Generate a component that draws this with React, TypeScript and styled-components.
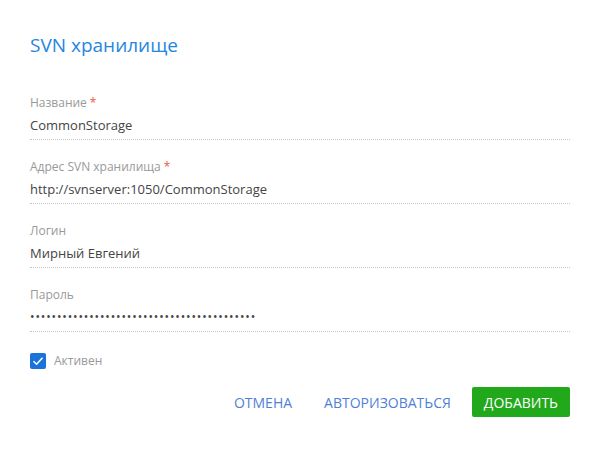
import React from "react";
import styled, { createGlobalStyle } from "styled-components";

const Global = createGlobalStyle`
  html, body { margin: 0; padding: 0; background: #ffffff; }
  body { font-family: "Open Sans", "Liberation Sans", sans-serif; }
`;

const Dialog = styled.div`
  width: 600px;
  height: 464px;
  box-sizing: border-box;
  padding: 31px 30px 0 30px;
  display: flex;
  flex-direction: column;
`;

const Title = styled.h1`
  margin: 0 0 36px 0;
  font-size: 19px;
  line-height: 28px;
  font-weight: 400;
  color: #1f86e3;
`;

const Fields = styled.div`
  display: flex;
  flex-direction: column;
  gap: 19px;
`;

const Field = styled.div`
  display: flex;
  flex-direction: column;
  padding-bottom: 4px;
  border-bottom: 1px dotted #c6c6c6;
`;

const Label = styled.div`
  font-size: 12px;
  line-height: 16px;
  color: #999999;
  margin-bottom: 4px;
`;

const Required = styled.span`
  color: #f2553d;
  margin-left: 3px;
`;

const Value = styled.div<{ $secret?: boolean }>`
  font-size: 13px;
  line-height: 20px;
  color: #444444;
  white-space: nowrap;
  ${(p) => (p.$secret ? "letter-spacing: 0.87px; font-size: 12px;" : "")}
`;

const CheckRow = styled.label`
  display: flex;
  align-items: center;
  gap: 8px;
  margin-top: 20px;
  font-size: 12px;
  color: #999999;
`;

const CheckBox = styled.span`
  width: 16px;
  height: 16px;
  border-radius: 2px;
  background: #1a73d9;
  display: flex;
  align-items: center;
  justify-content: center;
`;

const Actions = styled.div`
  display: flex;
  justify-content: flex-end;
  align-items: center;
  margin-top: 18px;
`;

const TextButton = styled.button`
  background: none;
  border: none;
  padding: 0 16px;
  height: 30px;
  font-family: inherit;
  font-size: 14px;
  text-transform: uppercase;
  color: #4f7fd8;
  cursor: pointer;
`;

const PrimaryButton = styled.button`
  background: #22a81b;
  border: none;
  border-radius: 2px;
  height: 30px;
  padding: 0 12px;
  margin-left: 5px;
  font-family: inherit;
  font-size: 14px;
  text-transform: uppercase;
  color: #ffffff;
  cursor: pointer;
`;

const fields: { label: string; value: string; required?: boolean; secret?: boolean }[] = [
  { label: "Название", value: "CommonStorage", required: true },
  { label: "Адрес SVN хранилища", value: "http://svnserver:1050/CommonStorage", required: true },
  { label: "Логин", value: "Мирный Евгений" },
  { label: "Пароль", value: "•".repeat(42), secret: true },
];

export default function App() {
  return (
    <>
      <Global />
      <Dialog>
        <Title>SVN хранилище</Title>
        <Fields>
          {fields.map((f) => (
            <Field key={f.label}>
              <Label>
                {f.label}
                {f.required && <Required>*</Required>}
              </Label>
              <Value $secret={f.secret}>{f.value}</Value>
            </Field>
          ))}
        </Fields>
        <CheckRow>
          <CheckBox>
            <svg width="12" height="10" viewBox="0 0 12 10">
              <path d="M1.5 5.2 L4.6 8.2 L10.5 1.8" fill="none" stroke="#fff" strokeWidth="1.6" />
            </svg>
          </CheckBox>
          Активен
        </CheckRow>
        <Actions>
          <TextButton>Отмена</TextButton>
          <TextButton>Авторизоваться</TextButton>
          <PrimaryButton>Добавить</PrimaryButton>
        </Actions>
      </Dialog>
    </>
  );
}
